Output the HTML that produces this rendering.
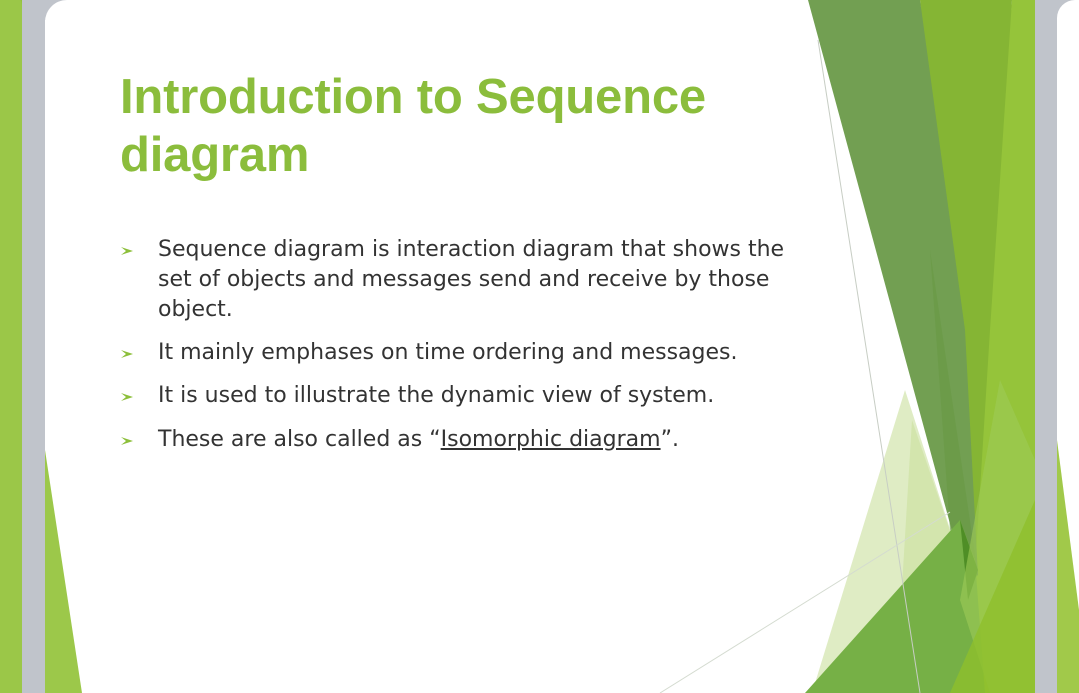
<!DOCTYPE html>
<html><head><meta charset="utf-8"><style>
html,body{margin:0;padding:0;width:1079px;height:693px;overflow:hidden;background:#c0c4cb;}
.abs{position:absolute;}
.t{position:absolute;left:120px;font-family:"Liberation Sans",sans-serif;font-weight:bold;font-size:49px;color:#8bbd3c;letter-spacing:-0.2px;line-height:58px;top:68px;}
.b{position:absolute;left:158px;font-family:"DejaVu Sans",sans-serif;font-size:22px;color:#333;line-height:30px;white-space:nowrap;}
.ar{position:absolute;left:120px;width:14px;height:14px;}
</style></head><body>
<svg class="abs" style="left:0;top:0" width="1079" height="693" viewBox="0 0 1079 693">
  <rect x="0" y="0" width="22" height="693" fill="#93c23b"/>
  <path d="M0 0 H20 Q22 0 22 10 V693 H0Z" fill="#9bc748"/>
  <rect x="45" y="0" width="990" height="693" rx="22" fill="#fff"/>
  <rect x="45" y="20" width="990" height="673" fill="#fff"/>
  <path d="M45 450 L82 693 L45 693Z" fill="#9cc84a"/>
  <rect x="1057" y="0" width="40" height="693" rx="18" fill="#fff"/>
  <path d="M1057 440 L1079 610 L1079 693 L1057 693Z" fill="#a1c94a"/>
  <!-- right decorative shapes -->
  <path d="M1012 0 L1035 0 L1035 693 L945 693 Z" fill="#95c43a"/>
  <path d="M920 0 L1012 0 L990 330 L975 570 Z" fill="#85b534"/>
  <path d="M808 0 L920 0 L965 330 L978 575 L962 568 Z" fill="#729f52"/>
  <path d="M930 250 L978 575 L955 600 Z" fill="#6a9a46" opacity="0.7"/>
  <path d="M905 390 L960 560 L870 693 L812 693 Z" fill="#dfecc4"/>
  <path d="M912 420 L960 560 L900 620 Z" fill="#cfe3a8" opacity="0.8"/>
  <path d="M960 520 L975 560 L985 693 L805 693 Z" fill="#76b046"/>
  <path d="M960 520 L978 570 L968 600Z" fill="#4f8e26"/>
  <path d="M1000 380 L1035 460 L1035 693 L990 693 L960 600Z" fill="#9fcc57" opacity="0.6"/>
  <path d="M1035 500 L1035 693 L950 693Z" fill="#8fbf2c" opacity="0.8"/>
  <line x1="818" y1="40" x2="920" y2="693" stroke="#c7cdc4" stroke-width="1"/>
  <line x1="660" y1="693" x2="950" y2="512" stroke="#d4dbd0" stroke-width="1"/>
  <rect x="1035" y="0" width="22" height="693" fill="#c0c4cb"/>
  <rect x="22" y="0" width="23" height="693" fill="#c0c4cb"/>
</svg>
<div class="t">Introduction to Sequence<br>diagram</div>
<svg class="ar" style="top:244px" viewBox="0 0 14 14"><path d="M1 3 L13 7 L1 11 L6 7Z" fill="#8cbf3a"/></svg>
<svg class="ar" style="top:347px" viewBox="0 0 14 14"><path d="M1 3 L13 7 L1 11 L6 7Z" fill="#8cbf3a"/></svg>
<svg class="ar" style="top:390px" viewBox="0 0 14 14"><path d="M1 3 L13 7 L1 11 L6 7Z" fill="#8cbf3a"/></svg>
<svg class="ar" style="top:434px" viewBox="0 0 14 14"><path d="M1 3 L13 7 L1 11 L6 7Z" fill="#8cbf3a"/></svg>
<div class="b" style="top:235px">Sequence diagram is interaction diagram that shows the<br>set of objects and messages send and receive by those<br>object.</div>
<div class="b" style="top:338px">It mainly emphases on time ordering and messages.</div>
<div class="b" style="top:381px">It is used to illustrate the dynamic view of system.</div>
<div class="b" style="top:425px">These are also called as “<u>Isomorphic diagram</u>”.</div>
</body></html>
